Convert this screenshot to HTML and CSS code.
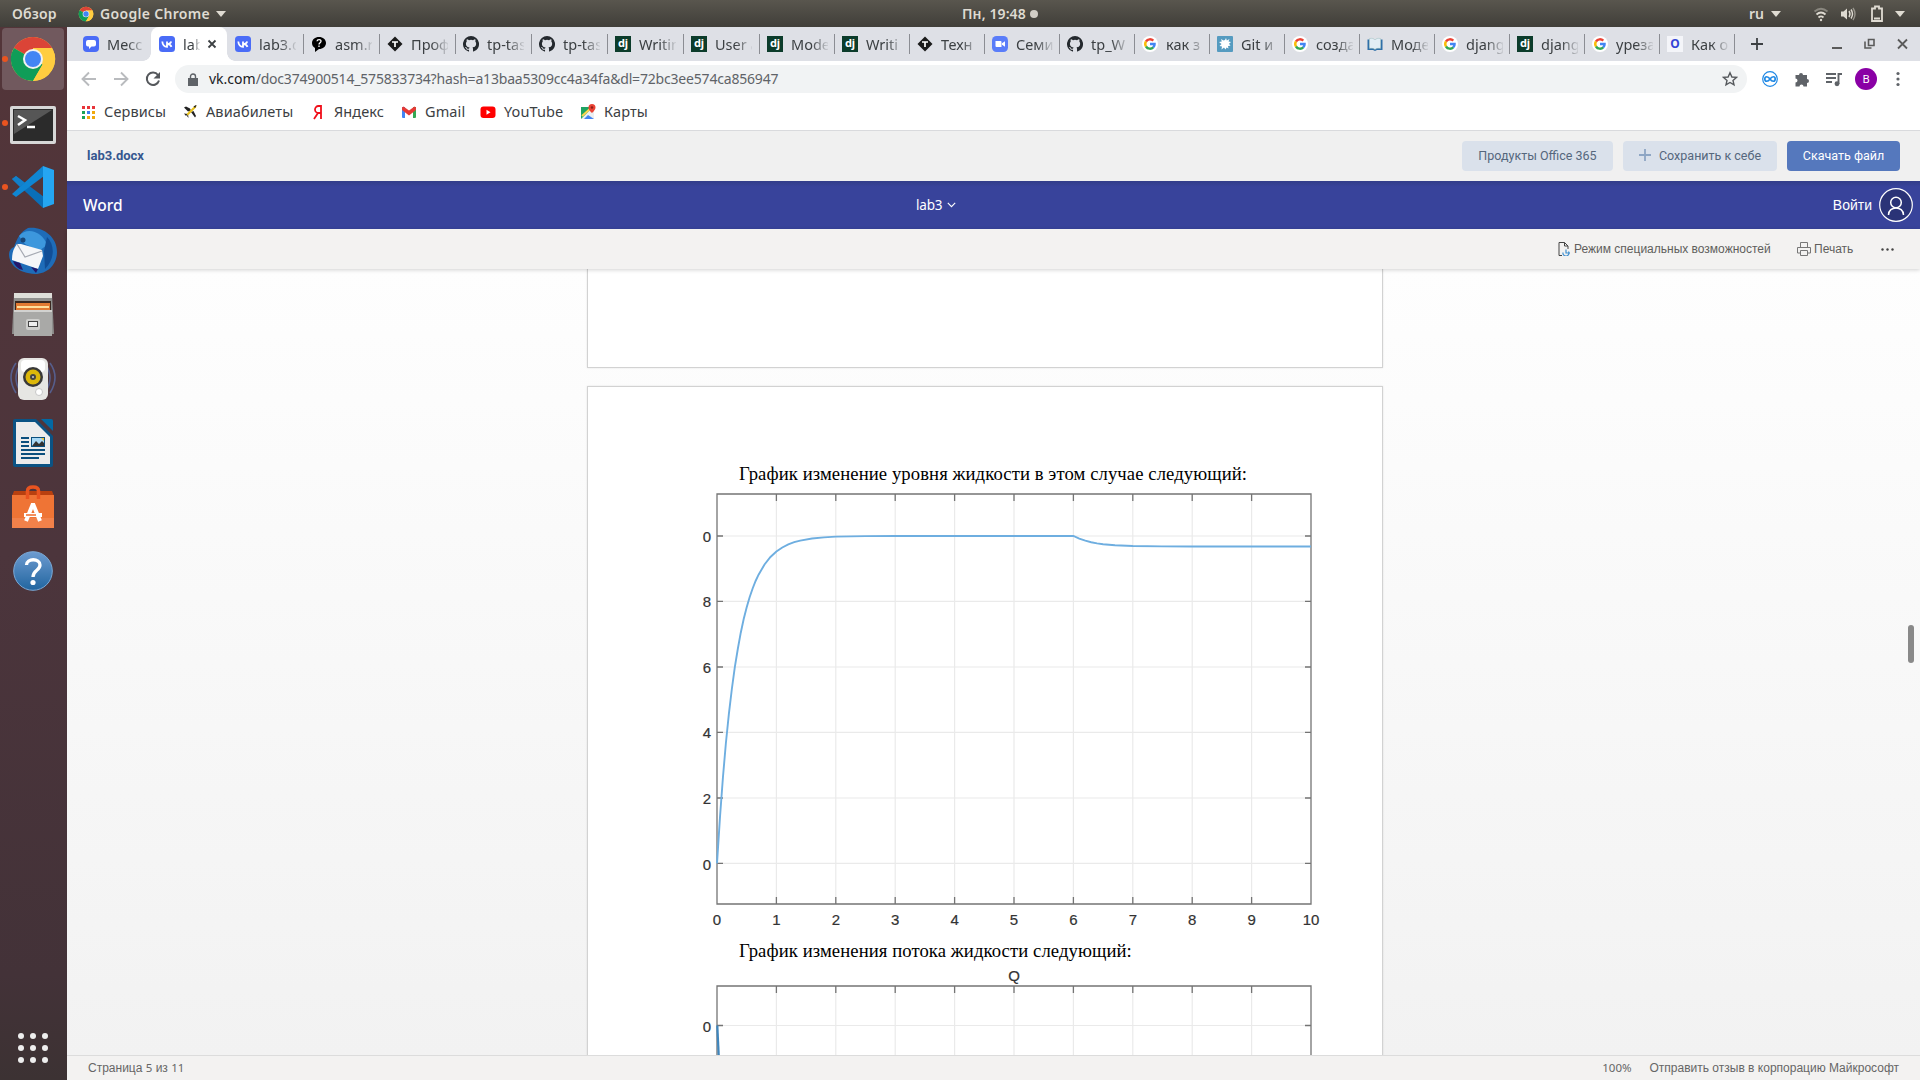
FILE: index.html
```html
<!DOCTYPE html>
<html lang="ru">
<head>
<meta charset="utf-8">
<title>lab3.docx</title>
<link rel="stylesheet" href="styles.css">
</head>
<body>
<svg class="defs" width="0" height="0" aria-hidden="true">
  <symbol id="chrome" viewBox="0 0 48 48">
    <circle cx="24" cy="24" r="22" fill="#fc4"/>
    <path d="M24 24 4.9 13A22 22 0 0 1 43 13z" fill="#db4437"/>
    <path d="M4.9 13A22 22 0 0 0 24 46l10-17-10-5z" fill="#0f9d58"/>
    <path d="M43.1 13H24v11l9.500 5.500L24 46A22 22 0 0 0 43.100 13z" fill="#ffcd40"/>
    <circle cx="24" cy="24" r="10" fill="#f1f1f1"/><circle cx="24" cy="24" r="8" fill="#4285f4"/>
  </symbol>
  <symbol id="msg" viewBox="0 0 16 16"><rect width="16" height="16" rx="4" fill="#4a6cf7"/><path d="M5 4h6a2 2 0 0 1 2 2v2.500a2 2 0 0 1-2 2H8.500L6 13v-2.500H5a2 2 0 0 1-2-2V6a2 2 0 0 1 2-2z" fill="#fff"/></symbol>
  <symbol id="vk" viewBox="0 0 16 16"><rect width="16" height="16" rx="3.500" fill="#4a6cf7"/><path d="M3.300 5.500c.3 3.500 2 5.300 4.700 5.300V5.500M8 8.200c2 0 3.600-1 4.300-2.700M8.200 8.100c2 0 3.600 1 4.300 2.700" fill="none" stroke="#fff" stroke-width="1.800"/></symbol>
  <symbol id="ask" viewBox="0 0 16 16"><path d="M8 1c4 0 7 2.600 7 6s-3 6-7 6l-4 3v-4C2 11 1 9 1 7c0-3.400 3-6 7-6z" fill="#000"/><path d="M6 5.300C6.200 3 10.200 3 10 5.300c0 1.500-2 1.400-2 3.200M8 9.500V11" fill="none" stroke="#fff" stroke-width="1.300"/></symbol>
  <symbol id="tp" viewBox="0 0 16 16"><path d="M8 .5 15.500 8 8 15.500.5 8z" fill="#1b1b1b"/><path d="M5 6h6M8 6v5" stroke="#fff" stroke-width="1.700"/></symbol>
  <symbol id="gh" viewBox="0 0 16 16"><path d="M8 0a8 8 0 0 0-2.530 15.590c.4.070.550-.170.550-.380v-1.490c-2.010.370-2.690-.490-2.690-.940-.090-.230-.480-.940-.820-1.130-.280-.150-.680-.520-.010-.530.630-.010 1.080.580 1.230.820.720 1.210 1.870.870 2.330.660.070-.520.280-.870.510-1.070-1.780-.200-3.640-.890-3.640-3.950 0-.870.310-1.590.820-2.150-.080-.200-.360-1.020.080-2.120 0 0 .670-.210 2.200.820a7.500 7.500 0 0 1 4 0c1.530-1.040 2.200-.820 2.200-.820.440 1.100.160 1.920.080 2.120.510.560.820 1.270.820 2.150 0 3.070-1.870 3.750-3.650 3.950.290.250.540.730.540 1.480v2.200c0 .210.150.460.550.380A8 8 0 0 0 8 0z" fill="#24292e"/></symbol>
  <symbol id="g" viewBox="0 0 16 16"><circle cx="8" cy="8" r="8" fill="#fff"/><g fill="none" stroke-width="2.400"><path d="M4 5.500A4.700 4.700 0 0 1 11.300 4.700" stroke="#ea4335"/><path d="M4 5.500a4.700 4.700 0 0 0 0 5" stroke="#fbbc05"/><path d="M4 10.500a4.700 4.700 0 0 0 7.400.7" stroke="#34a853"/><path d="M11.200 11.300c1-.9 1.500-2 1.400-3.300H8" stroke="#4285f4"/></g></symbol>
  <symbol id="zoomcam" viewBox="0 0 16 16"><rect width="16" height="16" rx="4.500" fill="#5a7df9"/><path d="M3.500 5h5a1 1 0 0 1 1 1v5h-5a1 1 0 0 1-1-1zM10 7.300l3-2v5.500l-3-2z" fill="#fff"/></symbol>
  <symbol id="git" viewBox="0 0 16 16"><rect width="16" height="16" rx="1" fill="#559bc0"/><path d="M8 4l1-2 .8 2.500L12.500 3l-1 2.500 2.500.5-2 1.800 1.500 2-2.500.2.500 2.500-2-1-1 2-1.500-2-2.500 2 .5-3L2.500 10l2-2L2 6l2.800-.5L4 3l2.500 1.500z" fill="#fff"/></symbol>
  <symbol id="book" viewBox="0 0 16 16"><path d="M.5 3.500h2v8h11v-8h2V14H10l-2 1-2-1H.5z" fill="#2f6fa8"/><path d="M2.500 2.500C5 2 7 2.500 8 4c1-1.500 3-2 5.500-1.500v10C11 12 9 12.500 8 13.500 7 12.500 5 12 2.500 12.500z" fill="#e3edf5" stroke="#9bb" stroke-width=".5"/></symbol>
  <symbol id="tri" viewBox="0 0 10 6"><path d="M0 0h10L5 6z" fill="#dfdbd2"/></symbol>
</svg>

<header class="topbar">
  <span class="overview">Обзор</span>
  <svg class="app-icon" width="16" height="16"><use href="#chrome"/></svg>
  <span class="app-name">Google Chrome</span>
  <svg class="app-tri" width="10" height="6"><use href="#tri"/></svg>
  <span class="clock">Пн, 19:48</span><i class="clock-dot"></i>
  <div class="tray">
    <span class="lang">ru</span>
    <svg width="10" height="6"><use href="#tri"/></svg>
    <svg class="wifi" width="16" height="16" viewBox="0 0 16 16" fill="none" stroke="#dfdbd2" stroke-width="1.800"><path d="M1.500 5.500q6.500-5.500 13 0" opacity=".4"/><path d="M3.500 8.500q4.500-4 9 0M5.500 11.500q2.500-2.200 5 0"/><circle cx="8" cy="14" r="1.200" fill="#dfdbd2" stroke="none"/></svg>
    <svg class="vol" width="16" height="16" viewBox="0 0 16 16" fill="none" stroke="#dfdbd2" stroke-width="1.400"><path d="M1 5.500h2.500L7 2.500v11l-3.500-3H1z" fill="#dfdbd2" stroke="none"/><path d="M9 5q2 3 0 6M11 3.500q3 4.500 0 9"/><path d="M13 2q4 6 0 12" opacity=".5"/></svg>
    <svg class="bat" width="12" height="17" viewBox="0 0 12 17"><path d="M4 1.500h4v2h3v12.500H1V3.500h3z" fill="none" stroke="#dfdbd2" stroke-width="1.800"/><path d="M3 12.500h6v2H3z" fill="#dfdbd2"/></svg>
    <svg width="10" height="6"><use href="#tri"/></svg>
  </div>
</header>

<div class="desktop">
<nav class="launcher">
  <div class="app active running"><svg width="48" height="48" viewBox="0 0 48 48"><use href="#chrome"/></svg></div>
  <div class="app running low"><svg width="46" height="38" viewBox="0 0 46 38"><rect width="46" height="38" rx="2" fill="#d7d7d7"/><rect x="3" y="3" width="40" height="32" fill="#2b2b2b"/><path d="M4 4h38L4 28z" fill="#565656"/><path d="M8 10l7 4-7 5M17 21h8" fill="none" stroke="#fff" stroke-width="2.500"/></svg></div>
  <div class="app running"><svg width="44" height="44" viewBox="0 0 44 44"><path d="M1 14l4-3 28 21-1 11z" fill="#0a6fb8"/><path d="M1 29l4 3L33 11 32 1z" fill="#0f86d2"/><path d="M32 1l11 4v34l-11 4z" fill="#25a6f2"/><path d="M1 14l4-3 9 7-5 4z" fill="#1280ca"/></svg></div>
  <div class="app"><svg width="48" height="48" viewBox="0 0 48 48"><path d="M5 20C8 12 11 5 19 1c14-2 29 8 29 24 0 12-9 22-22 22C10 46 0 38 0 27c0-3 2-6 5-7z" fill="#1e6cb8"/><path d="M10 9c8-10 24-4 28 9L30 24 16 17z" fill="#3c97dd"/><path d="M38 10c8 8 8 22-2 32L35 24z" fill="#114e96"/><path d="M8 17l4 0 21 6 1 6-5 13L3 33c0-6 1-11 5-16z" fill="#f5f6f8"/><path d="M8 17l8 13 17-6" fill="none" stroke="#a5a9b2" stroke-width="1.200"/><path d="M4 34l7 2 3 7C9 42 6 39 4 34zM22 40l7 2-2 4z" fill="#24186a"/><circle cx="14" cy="13" r="2.500" fill="#174678"/></svg></div>
  <div class="app"><svg width="42" height="44" viewBox="0 0 42 44"><path d="M2 1h38l2 40H0z" fill="#8f8f8d"/><path d="M2 0h38v5H2z" fill="#deded9"/><path d="M3 8h36v12H3z" fill="#3a2820"/><path d="M4 10h34v9H4z" fill="#e27a32"/><path d="M5 13h32v2H5z" fill="#ffdf9c"/><path d="M2 17h38v26H2z" fill="#a9a9a7"/><path d="M2 17h38v2H2z" fill="#d2d2d0"/><rect x="14" y="26" width="14" height="11" rx="2" fill="#cfcfcd"/><rect x="16.500" y="28.500" width="9" height="5" fill="#efefef" stroke="#444"/></svg></div>
  <div class="app"><svg width="48" height="44" viewBox="0 0 48 44"><g fill="none" stroke="#565e8c" stroke-width="1.600"><path d="M7 6q-10 14 0 30M11 8q-8 13 0 26M41 6q10 14 0 30M37 8q8 13 0 26"/></g><rect x="9" y="1" width="30" height="42" rx="6" fill="#e6e6e3"/><rect x="12" y="3" width="24" height="12" rx="4" fill="#fff"/><circle cx="24" cy="20" r="10" fill="#393939"/><circle cx="24" cy="20" r="7.500" fill="#dcb70a"/><circle cx="24" cy="20" r="3" fill="#444"/><circle cx="24" cy="20" r="1" fill="#ccc"/><circle cx="30" cy="35" r="3.500" fill="#fff" stroke="#c7c7c7"/></svg></div>
  <div class="app"><svg width="40" height="48" viewBox="0 0 40 48"><path d="M2 0h21l17 17v29a2 2 0 0 1-2 2H2a2 2 0 0 1-2-2V2a2 2 0 0 1 2-2z" fill="#0b5384"/><path d="M28 0h10a2 2 0 0 1 2 2v10z" fill="#0369a3"/><path d="M3 3h19l15 15v27H3z" fill="#ececec"/><g stroke="#0b4f7d" stroke-width="2"><path d="M8 19h8M8 23h8M8 27h8M8 31h24M8 35h24M8 39h18"/></g><rect x="18.500" y="18.500" width="13" height="9" fill="#a8d8f5" stroke="#0b4f7d"/><path d="M19 27l4-5 3 3 3-3 2 2v3z" fill="#333"/><path d="M28 19h3v3z" fill="#f0c030"/></svg></div>
  <div class="app"><svg width="42" height="44" viewBox="0 0 42 44"><path d="M2 6h38l2 5H0z" fill="#b8400f"/><path d="M0 10h42v33H0z" fill="#ef7435"/><path d="M0 33h42v10H0z" fill="#f2814a"/><path d="M15.500 14V6q0-4 5.500-4t5.500 4v8" fill="none" stroke="#e95420" stroke-width="3.500"/><path d="M14 36l6.500-16h1L28 36M12 30h18" fill="none" stroke="#fff" stroke-width="4"/><path d="M14 30h10" stroke="#ef6a2a" stroke-width="1.500"/></svg></div>
  <div class="app"><svg width="40" height="40" viewBox="0 0 40 40"><defs><linearGradient id="hg" x2="0" y2="1"><stop stop-color="#6d9bd0"/><stop offset="1" stop-color="#21659f"/></linearGradient></defs><circle cx="20" cy="20" r="19.300" fill="url(#hg)" stroke="#7ba9d6"/><path d="M13.500 14c0-7 13.500-7 13.500 0 0 5.500-7 5-7 12" fill="none" stroke="#fff" stroke-width="3.300"/><circle cx="20" cy="31.500" r="2.600" fill="#fff"/></svg></div>
  <div class="show-apps"><i></i><i></i><i></i><i></i><i></i><i></i><i></i><i></i><i></i></div>
</nav>

<main class="window">
  <div class="tabs">
    <div class="tab w76 nosep"><svg><use href="#msg"/></svg><span>Месс</span></div>
    <div class="tab w76 current"><svg><use href="#vk"/></svg><span>lab</span><svg class="x" viewBox="0 0 10 10"><path d="M1.500 1.500l7 7M8.500 1.500l-7 7" stroke="#3c4043" stroke-width="1.800"/></svg></div>
    <div class="tab w76"><svg><use href="#vk"/></svg><span>lab3.d</span></div>
    <div class="tab w76"><svg><use href="#ask"/></svg><span>asm.r</span></div>
    <div class="tab w76"><svg><use href="#tp"/></svg><span>Проф</span></div>
    <div class="tab w76"><svg><use href="#gh"/></svg><span>tp-tas</span></div>
    <div class="tab w76"><svg><use href="#gh"/></svg><span>tp-tas</span></div>
    <div class="tab w76"><b class="dj">dj</b><span>Writin</span></div>
    <div class="tab w76"><b class="dj">dj</b><span>User a</span></div>
    <div class="tab"><b class="dj">dj</b><span>Mode</span></div>
    <div class="tab"><b class="dj">dj</b><span>Writi</span></div>
    <div class="tab"><svg><use href="#tp"/></svg><span>Техн</span></div>
    <div class="tab"><svg><use href="#zoomcam"/></svg><span>Семи</span></div>
    <div class="tab"><svg><use href="#gh"/></svg><span>tp_W</span></div>
    <div class="tab"><svg><use href="#g"/></svg><span>как з</span></div>
    <div class="tab"><svg><use href="#git"/></svg><span>Git и</span></div>
    <div class="tab"><svg><use href="#g"/></svg><span>созда</span></div>
    <div class="tab"><svg><use href="#book"/></svg><span>Моде</span></div>
    <div class="tab"><svg><use href="#g"/></svg><span>djang</span></div>
    <div class="tab"><b class="dj">dj</b><span>djang</span></div>
    <div class="tab"><svg><use href="#g"/></svg><span>уреза</span></div>
    <div class="tab"><b class="oo">O</b><span>Как о</span></div>
    <svg class="plus" viewBox="0 0 12 12"><path d="M6 0v12M0 6h12" stroke="#3c4043" stroke-width="1.800"/></svg>
    <div class="winbtns">
      <svg width="10" height="12" viewBox="0 0 10 12"><path d="M0 10h10" stroke="#5a5a5a" stroke-width="2"/></svg>
      <svg width="11" height="12" viewBox="0 0 11 12" fill="none" stroke="#5a5a5a" stroke-width="1.600"><path d="M4.500 1.500h5.500v6H4.500zM1 3.500V10h6.500"/></svg>
      <svg width="11" height="12" viewBox="0 0 11 12"><path d="M1 1.500l9 9M10 1.500l-9 9" stroke="#5a5a5a" stroke-width="1.800"/></svg>
    </div>
  </div>

  <div class="toolbar">
    <svg class="nav" viewBox="0 0 16 16" fill="none" stroke="#b9bbbe" stroke-width="1.900"><path d="M15 8H2M8 1.500L1.500 8 8 14.500"/></svg>
    <svg class="nav" viewBox="0 0 16 16" fill="none" stroke="#b9bbbe" stroke-width="1.900"><path d="M1 8h13M8 1.500L14.500 8 8 14.500"/></svg>
    <svg class="nav" viewBox="0 0 16 16"><path d="M13 4A6.200 6.200 0 1 0 14 9.500" fill="none" stroke="#55585c" stroke-width="2"/><path d="M15 1v6.500H8.500z" fill="#55585c"/></svg>
    <div class="omnibox">
      <svg width="10" height="13" viewBox="0 0 10 13"><path d="M0 5h10v8H0z" fill="#5f6368"/><path d="M2.500 5.500V3.500a2.500 2.500 0 0 1 5 0v2" fill="none" stroke="#5f6368" stroke-width="1.400"/></svg>
      <span class="url"><b>vk.com</b>/doc374900514_575833734?hash=a13baa5309cc4a34fa&amp;dl=72bc3ee574ca856947</span>
      <svg class="star" width="16" height="16" viewBox="0 0 16 16"><path d="M8 1.800l1.900 4.200 4.500.4-3.400 3 1 4.500L8 11.500l-4 2.400 1-4.500-3.400-3 4.500-.4z" fill="none" stroke="#55585c" stroke-width="1.400"/></svg>
    </div>
    <div class="exts">
      <svg width="16" height="16" viewBox="0 0 16 16" fill="none" stroke="#1e88e5"><circle cx="8" cy="8" r="7.300" stroke-width="1.200"/><path d="M8 8C6 5 2.800 5 2.800 8S6 11 8 8s5.200-3 5.200 0S10 11 8 8z" stroke-width="1.700"/></svg>
      <svg width="16" height="16" viewBox="0 0 16 16"><path d="M1.500 4H5a2 2 0 1 1 4 0h4v4a2 2 0 1 1 0 4v3.500H9.500a2 2 0 1 0-4 0h-4V11.500a2 2 0 1 0 0-4z" fill="#5f6368"/></svg>
      <svg width="16" height="16" viewBox="0 0 16 16" fill="none" stroke="#5f6368" stroke-width="1.900"><path d="M0 3h10M0 7h10M0 11h6M12.500 13V3H16"/><circle cx="11" cy="12.800" r="1.500" fill="#5f6368"/></svg>
      <span class="avatar">В</span>
      <svg width="16" height="16" viewBox="0 0 16 16" fill="#5f6368"><circle cx="8" cy="2.500" r="1.600"/><circle cx="8" cy="8" r="1.600"/><circle cx="8" cy="13.500" r="1.600"/></svg>
    </div>
  </div>

  <div class="bookmarks">
    <div><svg viewBox="0 0 16 16"><path d="M2 2h3v3H2zM7 2h3v3H7zM12 2h3v3h-3z" fill="#e8353a"/><path d="M2 7h3v3H2z" fill="#19a456"/><path d="M7 7h3v3H7z" fill="#3b7ef0"/><path d="M12 7h3v3h-3z" fill="#f0a90c"/><path d="M2 12h3v3H2z" fill="#19a456"/><path d="M7 12h3v3H7zM12 12h3v3h-3z" fill="#f0a90c"/></svg><span>Сервисы</span></div>
    <div><svg viewBox="0 0 16 16"><path d="M2 3.500l2-1 4 2 1 2-3 1zM9 8l2.500-1L14 12l-1 1.500zM2 9.500l4 .5-2 2zM6 10l.5 4-1.500-2z" fill="#222"/><path d="M4.500 10l8-8 2-.5-.5 2-8 8z" fill="#e8c11b"/><path d="M11.500 2.500l2.500-1.500.500.500L13 4z" fill="#222"/></svg><span>Авиабилеты</span></div>
    <div><svg viewBox="0 0 16 16"><path d="M11 1v14M11 2H8.500a3.300 3.300 0 0 0 0 7H11M8 9l-4 6" fill="none" stroke="#f00f1a" stroke-width="1.800"/></svg><span>Яндекс</span></div>
    <div><svg viewBox="0 0 16 16"><path d="M1 3h3v11H2a1 1 0 0 1-1-1z" fill="#4285f4"/><path d="M12 3h3v10a1 1 0 0 1-1 1h-2z" fill="#34a853"/><path d="M1 3.500l1.500-1L8 6.500l5.500-4 1.500 1V6l-7 5.500L1 6z" fill="#e53935"/></svg><span>Gmail</span></div>
    <div><svg viewBox="0 0 16 16"><rect x=".5" y="2.500" width="15" height="11.500" rx="3" fill="#f00"/><path d="M6.500 5.800v5l4-2.500z" fill="#fff"/></svg><span>YouTube</span></div>
    <div><svg viewBox="0 0 16 16"><path d="M1 3h13v12H1z" fill="#1fa463"/><path d="M1 15L12 4l2 2v9z" fill="#eceff1"/><path d="M4 15l4-4 6 4z" fill="#4285f4"/><path d="M2 12l9-8" stroke="#ffd54f" stroke-width="2"/><path d="M12 0a3.500 3.500 0 0 1 3.500 3.500C15.500 6 12 9 12 9S8.500 6 8.500 3.500A3.500 3.500 0 0 1 12 0z" fill="#ea4335"/><circle cx="12" cy="3.500" r="1.200" fill="#8c1f17"/></svg><span>Карты</span></div>
  </div>

  <div class="dochead">
    <b>lab3.docx</b>
    <span class="btn p1">Продукты Office 365</span>
    <span class="btn p2"><svg width="12" height="12" viewBox="0 0 12 12"><path d="M6 0v12M0 6h12" stroke="#8ea6c4" stroke-width="1.800"/></svg>Сохранить к себе</span>
    <span class="btn p3">Скачать файл</span>
  </div>

  <div class="wordbar">
    <span class="brand">Word</span>
    <span class="docname">lab3 <svg width="9" height="6" viewBox="0 0 9 6"><path d="M.8.800l3.700 3.900L8.200.8" fill="none" stroke="#fff" stroke-width="1.100"/></svg></span>
    <span class="signin">Войти <svg width="34" height="34" viewBox="0 0 34 34" fill="none" stroke="#fff" stroke-width="1.200"><circle cx="17" cy="17" r="16.300" fill="#2a3377"/><circle cx="17" cy="14.500" r="5.300" stroke-width="1.500"/><path d="M9.500 27c0-9.500 15-9.500 15 0" stroke-width="1.500"/></svg></span>
  </div>

  <div class="cmdbar">
    <span class="c1"><svg width="13" height="14" viewBox="0 0 13 14" fill="none" stroke="#444"><path d="M4 13.500H1V.5h5.500L10 4v3M6.500.500V4H10"/><path d="M5 10.500a3 3 0 1 0 5.500-1M8 7.500v3.500h4" stroke="#3f8fd0" stroke-width="1.200"/></svg><i>Режим специальных возможностей</i></span>
    <span class="c2"><svg width="14" height="14" viewBox="0 0 14 14" fill="none" stroke="#777"><path d="M3.500 5V.5h7V5M3.500 11H.5V5.500h13V11h-3M3.500 8.500h7v5h-7z"/></svg><i>Печать</i></span>
    <svg class="dots" width="13" height="3" viewBox="0 0 13 3" fill="#444"><circle cx="1.500" cy="1.500" r="1.200"/><circle cx="6.500" cy="1.500" r="1.200"/><circle cx="11.500" cy="1.500" r="1.200"/></svg>
  </div>

  <section class="canvas">
    <div class="sheet first"></div>
    <div class="sheet second">
      <p class="l1">График изменение уровня жидкости в этом случае следующий:</p>
      <svg class="chart" width="640" height="440" viewBox="-20 -5 640 440">
        <path class="grid" d="M59.400 0v410M118.800 0v410M178.200 0v410M237.600 0v410M297 0v410M356.400 0v410M415.800 0v410M475.200 0v410M534.600 0v410M0 42h594M0 107.400h594M0 173h594M0 238.400h594M0 304h594M0 369.400h594"/>
        <path class="axis" d="M0 0h594v410H0zM59.400 0v7m0 403v-7M118.800 0v7m0 403v-7M178.200 0v7m0 403v-7M237.600 0v7m0 403v-7M297 0v7m0 403v-7M356.400 0v7m0 403v-7M415.800 0v7m0 403v-7M475.200 0v7m0 403v-7M534.600 0v7m0 403v-7M0 42h6m588 0h-6M0 107.400h6m588 0h-6M0 173h6m588 0h-6M0 238.400h6m588 0h-6M0 304h6m588 0h-6M0 369.400h6m588 0h-6"/>
        <path class="curve" d="M0 369.400L3 323 5.940 283.300 8.900 249 11.880 219.900 14.850 195 17.820 173.100 20.800 155 23.760 138.700 26.700 125 29.700 113.200 32.700 103 35.640 94.500 38.600 87 41.580 80.700 47.520 70.500 53.460 63 59.400 57.500 65.300 53.500 71.300 50.400 77.200 48.200 83.200 46.600 95 44.500 107 43.400 118.800 42.600 148.500 42.100 178 42H356.400L362.300 44.700 368.300 46.700 374.200 48.200 380 49.400 386.100 50.200 398 51.200 415.800 52 445 52.400 475 52.500H594"/>
        <g class="ynum"><text x="-6" y="47.500">0</text><text x="-6" y="113">8</text><text x="-6" y="178.500">6</text><text x="-6" y="244">4</text><text x="-6" y="309.500">2</text><text x="-6" y="375.500">0</text></g>
        <g class="xnum"><text x="0" y="431">0</text><text x="59.400" y="431">1</text><text x="118.800" y="431">2</text><text x="178.200" y="431">3</text><text x="237.600" y="431">4</text><text x="297" y="431">5</text><text x="356.400" y="431">6</text><text x="415.800" y="431">7</text><text x="475.200" y="431">8</text><text x="534.600" y="431">9</text><text x="594" y="431">10</text></g>
      </svg>
      <p class="l2">График изменения потока жидкости следующий:</p>
      <svg class="chart second-chart" width="640" height="120" viewBox="-20 -20 640 120">
        <path class="grid" d="M59.400 0v100M118.800 0v100M178.200 0v100M237.600 0v100M297 0v100M356.400 0v100M415.800 0v100M475.200 0v100M534.600 0v100M0 39.500h594"/>
        <path class="axis" d="M0 100V0h594v100M59.400 0v7M118.800 0v7M178.200 0v7M237.600 0v7M297 0v7M356.400 0v7M415.800 0v7M475.200 0v7M534.600 0v7M0 39.500h6m588 0h-6"/>
        <path class="curve deep" d="M.3 39.500L2 75"/>
        <g class="ynum"><text x="-6" y="45.500">0</text></g>
        <g class="xnum"><text x="297" y="-5.500">Q</text></g>
      </svg>
    </div>
    <i class="scroll"></i>
  </section>

  <footer class="status">
    <span class="s1">Страница <em>5</em> из <em>11</em></span>
    <span class="s2">100%</span>
    <span class="s3">Отправить отзыв в корпорацию Майкрософт</span>
  </footer>
</main>
</div>
</body>
</html>
```
FILE: styles.css
```css
* { box-sizing: border-box; }
body {
  margin: 0;
  width: 1920px;
  height: 1080px;
  overflow: hidden;
  font-family: "Noto Sans", sans-serif;
  color: #3c4043;
}
svg { display: block; flex: none; }
i, em { font-style: normal; }
.defs { position: absolute; }

/* system bar */
.topbar {
  height: 27px;
  display: flex;
  align-items: center;
  padding-left: 12px;
  background: linear-gradient(#59564e, #403e39);
  color: #dfdbd2;
  font-size: 14px;
  font-weight: 600;
  white-space: nowrap;
}
.topbar span { padding-bottom: 1px; }
.overview { width: 66px; letter-spacing: .2px; }
.app-icon { margin-right: 6px; }
.app-name { width: 116px; letter-spacing: .32px; }
.clock { margin-left: 736px; width: 67px; letter-spacing: .1px; }
.clock-dot { width: 8px; height: 8px; border-radius: 50%; background: #d2cec6; margin-left: 1px; }
.tray { display: flex; align-items: center; margin-left: auto; padding-right: 15px; }
.lang { width: 22px; }
.wifi { margin-left: 32px; }
.vol { margin: 0 15px 0 11px; }
.bat { margin-right: 12px; }

.desktop { display: flex; height: 1053px; }

/* launcher */
.launcher {
  width: 67px;
  flex: none;
  display: flex;
  flex-direction: column;
  padding: 1px 3px 0 2px;
  background: linear-gradient(#533539, #4c353c 50%, #433238 90%, #3c3233);
}
.app {
  height: 62px;
  margin-bottom: 2px;
  border-radius: 4px;
  display: flex;
  align-items: center;
  justify-content: center;
  position: relative;
}
.app.low { padding-top: 4px; }
.app.active { background: #71595e; }
.app.running::before {
  content: "";
  position: absolute;
  left: 0;
  top: 28px;
  width: 6px;
  height: 6px;
  border-radius: 50%;
  background: #e95420;
}
.show-apps {
  margin: auto 0 17px 16px;
  display: grid;
  grid-template-columns: repeat(3, 6px);
  gap: 6px;
}
.show-apps i { height: 6px; border-radius: 50%; background: #eee; }

.window { flex: 1; min-width: 0; display: flex; flex-direction: column; background: #fff; }

/* tab strip */
.tabs { height: 34px; flex: none; display: flex; padding-left: 8px; background: #dee0e6; }
.tab {
  width: 75px;
  flex: none;
  display: flex;
  align-items: center;
  padding-left: 8px;
  position: relative;
  font-size: 14.500px;
}
.tab.w76 { width: 76px; }
.tab > svg, .tab > b { width: 16px; height: 16px; margin-right: 8px; flex: none; }
.tab > span {
  width: 37px;
  padding-bottom: 1px;
  overflow: hidden;
  white-space: nowrap;
  mask-image: linear-gradient(90deg, #000 55%, transparent 105%);
}
.tab::after {
  content: "";
  position: absolute;
  right: -1px;
  top: 7px;
  width: 1px;
  height: 20px;
  background: #8b8d93;
}
.tab.nosep::after { display: none; }
.tab.current { background: #fff; border-radius: 8px 8px 0 0; }
.tab.current > span { width: 17px; }
.tab.current::before, .tab.current::after {
  content: "";
  position: absolute;
  top: auto;
  bottom: 0;
  width: 8px;
  height: 8px;
}
.tab.current::before { left: -8px; background: radial-gradient(circle at 0 0, transparent 7.500px, #fff 8px); }
.tab.current::after { right: -8px; background: radial-gradient(circle at 100% 0, transparent 7.500px, #fff 8px); }
.tab > svg.x { width: 10px; height: 10px; margin: 0 0 0 7px; }
.dj { background: #0c3c2b; color: #fff; font: bold 11px/14px "Noto Sans", sans-serif; text-align: center; }
.oo { background: #f4f5f9; color: #3544d6; font: bold 12px/16px "Noto Sans", sans-serif; text-align: center; }
.plus { width: 12px; height: 12px; margin: 11px 0 0 17px; }
.winbtns { display: flex; align-items: center; gap: 22px; margin-left: auto; padding-right: 12px; }

/* address row */
.toolbar { height: 36px; flex: none; display: flex; align-items: center; padding-left: 14px; }
.nav { width: 16px; height: 16px; margin-right: 16px; }
.omnibox {
  width: 1572px;
  height: 28px;
  margin-left: -2px;
  border-radius: 14px;
  background: #f1f3f4;
  display: flex;
  align-items: center;
  padding: 0 9px 0 13px;
}
.url { margin-left: 11px; padding-bottom: 2px; font-size: 14px; letter-spacing: -.190px; color: #5f6368; white-space: nowrap; }
.url b { font-weight: 400; color: #202124; letter-spacing: 0; }
.star { margin-left: auto; }
.exts { display: flex; align-items: center; gap: 16px; padding-left: 15px; }
.avatar {
  width: 22px;
  height: 22px;
  margin: 0 -3px;
  border-radius: 50%;
  background: #8a00a5;
  color: #fff;
  font-size: 11px;
  line-height: 22px;
  text-align: center;
}

/* bookmarks */
.bookmarks {
  height: 34px;
  flex: none;
  display: grid;
  grid-template-columns: 102px 128px 91px 79px 100px 100px;
  padding: 0 0 4px 13px;
  border-bottom: 1px solid #d9dadd;
  font-size: 14.500px;
  letter-spacing: .1px;
  white-space: nowrap;
}
.bookmarks div { display: flex; align-items: center; gap: 8px; }
.bookmarks svg { width: 16px; height: 16px; }
.bookmarks span { padding-bottom: 2px; }

/* file header */
.dochead {
  height: 50px;
  flex: none;
  display: flex;
  align-items: center;
  padding: 0 20px;
  background: #f0f0f0;
  font-family: Roboto, sans-serif;
  font-size: 12.500px;
  color: #55677d;
}
.dochead b { color: #35578f; margin-right: auto; font-size: 13px; padding-bottom: 1px; }
.btn {
  height: 30px;
  margin-left: 10px;
  padding-bottom: 2px;
  border-radius: 4px;
  background: #dae1eb;
  display: flex;
  align-items: center;
  justify-content: center;
  white-space: nowrap;
}
.p1 { width: 151px; }
.p2 { width: 154px; gap: 8px; }
.p3 { width: 113px; background: #5578bd; color: #fff; }

.wordbar {
  height: 48px;
  flex: none;
  display: grid;
  grid-template-columns: 833px auto 1fr;
  align-items: center;
  padding: 0 7px 0 16px;
  background: linear-gradient(#323d89, #38439b 12%);
  color: #fff;
}
.brand { font-size: 15.500px; font-weight: 500; }
.docname { display: flex; align-items: center; gap: 5px; font-size: 13.500px; letter-spacing: -.2px; }
.signin {
  justify-self: end;
  display: flex;
  align-items: center;
  gap: 7px;
  font: 14px "Liberation Sans", sans-serif;
}

.cmdbar {
  height: 40px;
  flex: none;
  display: flex;
  align-items: center;
  justify-content: flex-end;
  padding-right: 26px;
  background: #f3f2f1;
  box-shadow: 0 1px 4px rgba(0, 0, 0, .18);
  position: relative;
  z-index: 1;
  color: #605e5c;
  font: 12px "Liberation Sans", sans-serif;
}
.cmdbar span { display: flex; align-items: center; gap: 3px; white-space: nowrap; }
.c1 { width: 239px; }
.c2 { width: 84px; }

/* document canvas */
.canvas {
  height: 786px;
  flex: none;
  overflow: hidden;
  position: relative;
  background: linear-gradient(#fefefe, #f2f2f2);
}
.sheet { width: 796px; margin-left: 520px; background: #fff; border: 1px solid #d2d2d2; box-shadow: 0 0 2px rgba(0, 0, 0, .1); }
.first { height: 99px; border-top: 0; }
.second { height: 1100px; margin-top: 18px; padding: 75px 0 0 109px; }
.sheet p {
  margin: 0 0 0 42px;
  height: 27px;
  font: 18.670px/24px "Liberation Serif", serif;
  letter-spacing: .09px;
  color: #000;
  white-space: nowrap;
}
.sheet .l2 { margin-top: 10px; }
.chart { overflow: visible; }
.second-chart { margin-top: 0; }
.grid { fill: none; stroke: #eaeaea; stroke-width: 1.200; }
.axis { fill: none; stroke: #747474; stroke-width: 1.300; }
.curve { fill: none; stroke: #6eaee0; stroke-width: 1.900; }
.curve.deep { stroke: #3f86bd; stroke-width: 2.200; }
.ynum, .xnum { font: 15px "Liberation Sans", sans-serif; fill: #333; stroke: #333; stroke-width: .2px; }
.ynum { text-anchor: end; }
.xnum { text-anchor: middle; }
.scroll {
  position: absolute;
  right: 6px;
  top: 356px;
  width: 6px;
  height: 38px;
  border-radius: 3px;
  background: #898989;
}

.status {
  height: 25px;
  flex: none;
  display: flex;
  align-items: center;
  padding: 0 21px 1px;
  border-top: 1px solid #dcdcdc;
  background: #f3f2f1;
  color: #666;
  font: 12px "Liberation Sans", sans-serif;
}
.status em, .s2 { font-family: "Noto Sans", sans-serif; font-size: 11.500px; line-height: 14px; }
.s2 { margin-left: auto; margin-right: 18px; }
```
